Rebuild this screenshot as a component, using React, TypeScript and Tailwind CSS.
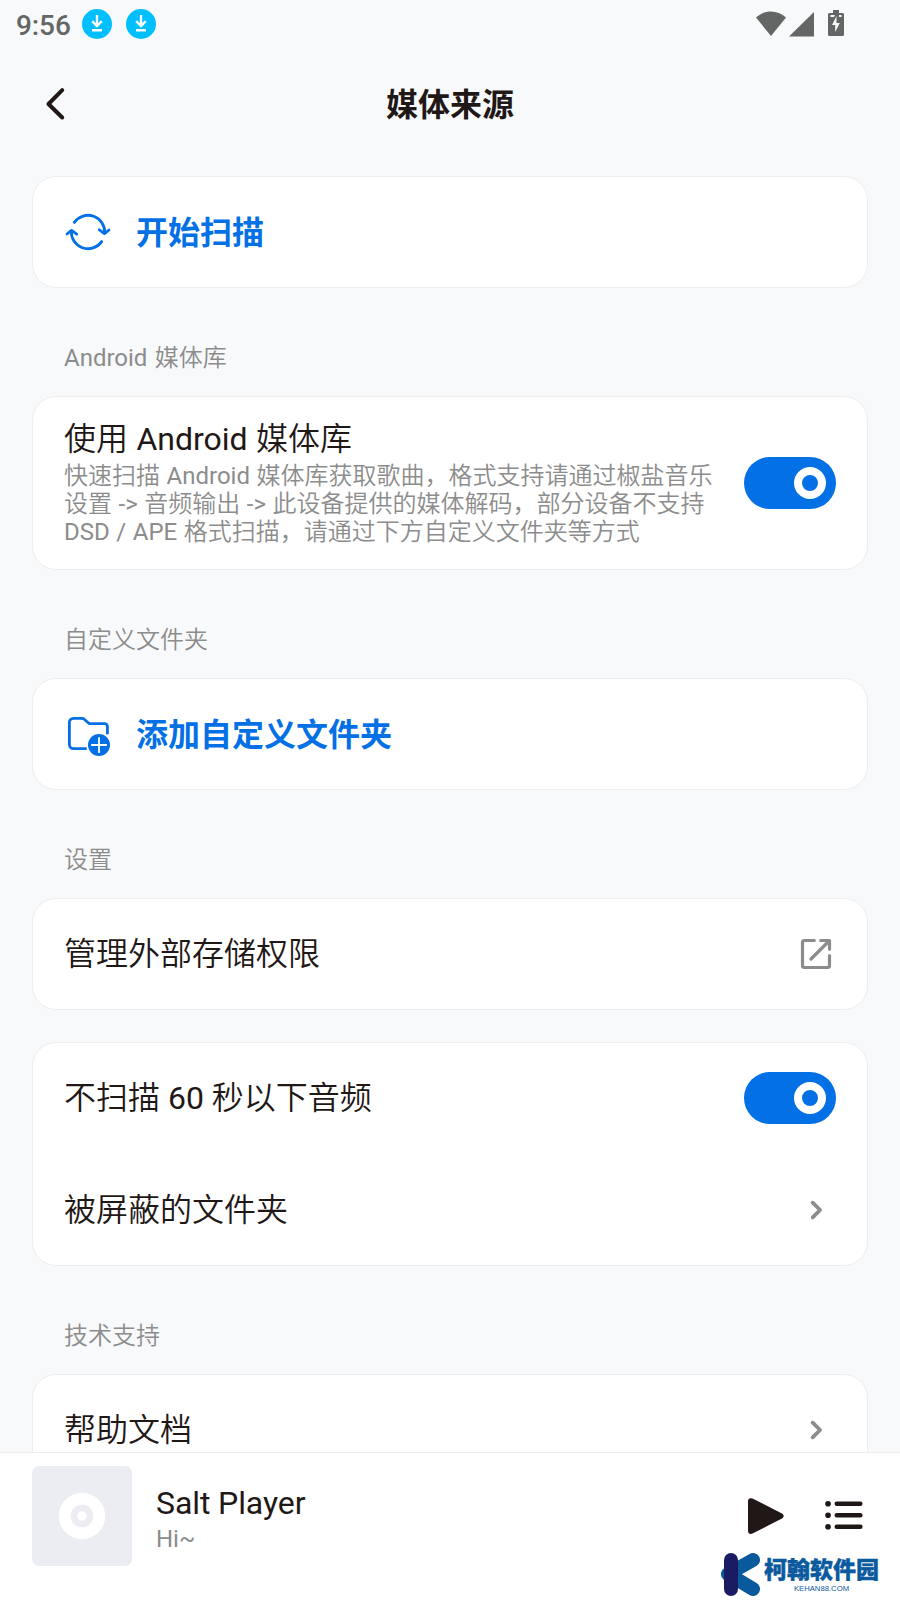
import type { ReactNode } from "react";

function Card({ children }: { children: ReactNode }) {
  return (
    <section className="shrink-0 rounded-[24px] border border-[#eeeeef] bg-white">{children}</section>
  );
}

function Label({ children }: { children: ReactNode }) {
  return (
    <h2 className="h-[108px] shrink-0 pt-14 pl-8 font-[Roboto,'Noto_Sans_CJK_SC_DemiLight','Noto_Sans_CJK_SC',sans-serif] text-[24px] leading-[28px] text-[#8c8c8c] [word-spacing:1.4px]">{children}</h2>
  );
}

function Switch() {
  return (
    <button className="flex h-[52px] w-[92px] shrink-0 items-center justify-end rounded-full bg-[#0470e6] pr-[10px]">
      <span className="size-8 rounded-full border-8 border-white" />
    </button>
  );
}

function Chevron() {
  return (
    <svg className="mr-3 h-6 w-4" viewBox="0 0 16 24" fill="none" stroke="#8c8c8c" strokeWidth="3.8" strokeLinecap="round" strokeLinejoin="round">
      <path d="M4.700 4.700 12.100 12 4.700 19.300" />
    </svg>
  );
}

function Row({ title, children }: { title: string; children: ReactNode }) {
  return (
    <div className="flex h-28 items-center justify-between px-[31px] font-[Roboto,'Noto_Sans_CJK_SC_DemiLight','Noto_Sans_CJK_SC',sans-serif] text-[32px] leading-[38px] text-[#1f1816] first:-mt-px last:-mb-px">
      <span>{title}</span>
      {children}
    </div>
  );
}

function Action({ title, icon }: { title: string; icon: ReactNode }) {
  return (
    <div className="-my-px flex h-28 items-center gap-[24px] pl-[31px] text-[32px] leading-[38px] font-bold text-[#0470e6]">
      {icon}
      <span className="pt-px">{title}</span>
    </div>
  );
}

function Download() {
  return (
    <svg className="size-[30px]" viewBox="0 0 30 30" fill="none">
      <circle cx="15" cy="15" r="15" fill="#00bfff" />
      <path d="M15 6v11.5M10.200 12.200l4.800 4.800 4.800-4.800M10 21.300h10" stroke="#fff" strokeWidth="2.4" />
    </svg>
  );
}

function SyncIcon() {
  return (
    <svg className="size-12" viewBox="0 0 48 48" fill="none" stroke="#0470e6" strokeWidth="2.8" strokeLinecap="round" strokeLinejoin="round">
      <path d="M10.320 14.420A16.700 16.700 0 0 1 40.650 25.300M35.300 21.800l5.200 3.800 4.500-3.600" />
      <path d="M37.680 33.580A16.700 16.700 0 0 1 7.350 22.700M12.700 26.200 7.500 22.400 3 26" />
    </svg>
  );
}

function FolderIcon() {
  return (
    <svg className="size-12" viewBox="0 0 48 48" fill="none" stroke="#0470e6" strokeWidth="2.8" strokeLinejoin="round">
      <path d="M22.7 38.600H9.400a4 4 0 0 1-4-4V12.300a4 4 0 0 1 4-4h8.300a4 4 0 0 1 2.500.9l5.200 4.500h15.200a2.800 2.800 0 0 1 2.800 2.800v7.700" />
      <circle cx="35" cy="35" r="11" fill="#0470e6" stroke="none" />
      <path d="M27.800 35h14.400M35 27.800v14.400" stroke="#fff" strokeWidth="1.800" strokeLinecap="round" />
    </svg>
  );
}

export default function App() {
  return (
    <div className="relative flex h-[1600px] w-[900px] flex-col overflow-hidden bg-[#f8f9fb] font-[Roboto,'Noto_Sans_CJK_SC',sans-serif]">
      <header className="flex h-12 shrink-0 items-center justify-between pr-[55px] pl-4">
        <div className="flex items-center">
          <time className="w-[66px] pt-1 text-[28px] leading-8 font-medium tracking-[-0.1px] text-[#646665]">9:56</time>
          <div className="flex gap-[14px]">
            <Download />
            <Download />
          </div>
        </div>
        <svg className="h-[28px] w-[90px]" viewBox="0 0 90 28" fill="#646665">
          <path d="M1 7.500C9.500-.5 22.500-.5 31 7.500L16 26Z" />
          <path d="M59 2v24.500H34Z" />
          <path d="M78 0h6v3h3.500q1.500 0 1.500 1.500v20q0 1.500-1.500 1.500h-13q-1.500 0-1.500-1.500v-20q0-1.500 1.500-1.500H78Z" />
          <path d="M81.500 6 77 15h3.200v7l4.600-9h-3.300ZM75.500 5h4.500l-1 2h-3.500ZM84 5h2.500v2H84Z" fill="#f8f9fb" />
        </svg>
      </header>

      <div className="grid h-28 shrink-0 grid-cols-[112px_1fr_112px] items-center">
        <svg className="ml-8 size-12" viewBox="0 0 48 48" fill="none" stroke="#1f1816" strokeWidth="4" strokeLinecap="round" strokeLinejoin="round">
          <path d="M30.200 10.200 16.500 24 30.200 37.500" />
        </svg>
        <h1 className="pt-px text-center text-[32px] leading-[38px] font-bold text-[#1f1816]">媒体来源</h1>
      </div>

      <main className="flex h-[1292px] shrink-0 flex-col overflow-hidden px-8 pt-4">
        <Card>
          <Action title="开始扫描" icon={<SyncIcon />} />
        </Card>
        <Label>Android 媒体库</Label>
        <Card>
          <div className="-my-px flex h-[174px] items-center justify-between px-[31px] font-[Roboto,'Noto_Sans_CJK_SC_DemiLight','Noto_Sans_CJK_SC',sans-serif]">
            <div>
              <h3 className="text-[32px] leading-[38px] text-[#1f1816] [word-spacing:0.5px]">使用 Android 媒体库</h3>
              <p className="pt-1 text-[24px] leading-[28px] whitespace-nowrap text-[#8c8c8c] [word-spacing:0.6px]">
                快速扫描 Android 媒体库获取歌曲，格式支持请通过椒盐音乐
                <br />
                设置 -&gt; 音频输出 -&gt; 此设备提供的媒体解码，部分设备不支持
                <br />
                DSD / APE 格式扫描，请通过下方自定义文件夹等方式
              </p>
            </div>
            <Switch />
          </div>
        </Card>
        <Label>自定义文件夹</Label>
        <Card>
          <Action title="添加自定义文件夹" icon={<FolderIcon />} />
        </Card>
        <Label>设置</Label>
        <Card>
          <Row title="管理外部存储权限">
            <svg className="size-10" viewBox="0 0 40 40" fill="none" stroke="#8c8c8c" strokeWidth="3.200" strokeLinecap="round" strokeLinejoin="round">
              <path d="M18.300 6.500H8.500a2 2 0 0 0-2 2v23a2 2 0 0 0 2 2h23a2 2 0 0 0 2-2V21.700M24.700 6.500h8.800V15.200M33 7 15 25" />
            </svg>
          </Row>
        </Card>
        <div className="h-8 shrink-0" />
        <Card>
          <Row title="不扫描 60 秒以下音频">
            <Switch />
          </Row>
          <Row title="被屏蔽的文件夹">
            <Chevron />
          </Row>
        </Card>
        <Label>技术支持</Label>
        <Card>
          <Row title="帮助文档">
            <Chevron />
          </Row>
        </Card>
      </main>

      <footer className="flex h-[148px] shrink-0 items-start border-t border-[#eeeeef] bg-white pt-[13px] pl-8">
        <svg className="size-[100px]" viewBox="0 0 100 100">
          <rect width="100" height="100" rx="7" fill="#ecedf3" />
          <circle cx="50" cy="50" r="23.200" fill="#fff" />
          <circle cx="50" cy="50" r="8" fill="none" stroke="#ecedf3" strokeWidth="6.500" />
        </svg>
        <div className="ml-6 flex-1 pt-[18px]">
          <div className="text-[32px] leading-[38px] tracking-[-0.1px] text-[#1f1816]">Salt Player</div>
          <div className="text-[24px] leading-[34px] text-[#8c8c8c]">Hi~</div>
        </div>
        <svg className="mt-[30px] mr-9 h-10 w-[116px]" viewBox="0 0 116 40" fill="#1f1816">
          <path d="M0 5.500Q0 1 4.500 2.500L34 17.500Q37.500 20 34 22.500L4.500 37.500Q0 39 0 34.500Z" />
          <g stroke="#1f1816" strokeLinecap="round">
            <path d="M80 7.700h.1M80 19.200h.1M80 30.700h.1" strokeWidth="5.600" />
            <path d="M88.800 7.700h23.500M88.800 19.200h23.500M88.800 30.700h23.500" strokeWidth="4.600" />
          </g>
        </svg>
      </footer>

      <div className="absolute top-[1552px] left-[721px] flex h-[45px] items-start">
        <svg className="h-[45px] w-[40px]" viewBox="0 0 40 45" fill="none" strokeLinecap="round">
          <path d="M7 22 32 8M7 22 32 37" stroke="#085a9d" strokeWidth="14" />
          <path d="M10 8v29" stroke="#1b1b63" strokeWidth="14" />
        </svg>
        <div className="ml-[3px] flex flex-col items-center whitespace-nowrap text-[#0b5a9e]">
          <div className="h-[32px] pt-px text-[23px] leading-[35px] font-black [-webkit-text-stroke:0.4px_#0b5a9e]">柯翰软件园</div>
          <div className="font-['Liberation_Sans',sans-serif] text-[7.7px] leading-[10px]">KEHAN88.COM</div>
        </div>
      </div>
    </div>
  );
}
